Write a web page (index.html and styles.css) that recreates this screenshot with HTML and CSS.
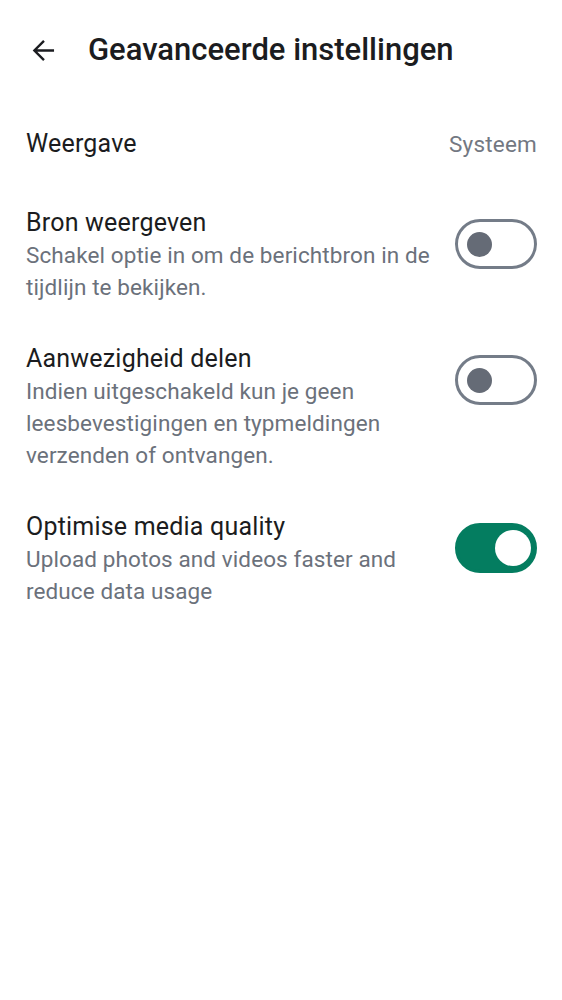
FILE: index.html
```html
<!DOCTYPE html>
<html lang="nl">
<head>
<meta charset="utf-8">
<link rel="stylesheet" href="styles.css">
</head>
<body>
<div class="screen">
  <header class="topbar">
    <svg class="back" width="24" height="24" viewBox="0 0 24 24"><path d="M23 12H2.5M12.5 2L2.5 12l10 10" fill="none" stroke="#1b1c20" stroke-width="2.5"/></svg>
    <h1 class="title">Geavanceerde instellingen</h1>
  </header>
  <div class="row simple">
    <span class="label">Weergave</span>
    <span class="value">Systeem</span>
  </div>
  <div class="row">
    <div class="text">
      <div class="label">Bron weergeven</div>
      <div class="desc">Schakel optie in om de berichtbron in de tijdlijn te bekijken.</div>
    </div>
    <div class="switch"><span class="knob"></span></div>
  </div>
  <div class="row">
    <div class="text">
      <div class="label">Aanwezigheid delen</div>
      <div class="desc">Indien uitgeschakeld kun je geen leesbevestigingen en typmeldingen verzenden of ontvangen.</div>
    </div>
    <div class="switch"><span class="knob"></span></div>
  </div>
  <div class="row">
    <div class="text">
      <div class="label">Optimise media quality</div>
      <div class="desc">Upload photos and videos faster and reduce data usage</div>
    </div>
    <div class="switch on"><span class="knob"></span></div>
  </div>
</div>
</body>
</html>
```
FILE: styles.css
```css
html, body { margin: 0; padding: 0; background: #fff; }
body { font-family: Roboto, "Noto Sans", sans-serif; color: #1b1c20; }
.screen { width: 562px; }
.topbar { display: flex; align-items: center; height: 100px; padding-left: 32px; }
.back { display: block; width: 23px; height: 23px; }
.title { margin: 0 0 0 33px; font-size: 31px; line-height: 40px; font-weight: 500; color: #1b1c20; }
.row { display: flex; align-items: flex-start; padding: 0 25px 0 26px; }
.row.simple { justify-content: space-between; align-items: center; height: 88px; margin-bottom: 19px; }
.label { font-size: 25px; line-height: 32px; letter-spacing: 0.2px; color: #1b1c20; }
.value { font-size: 22.5px; letter-spacing: 0.2px; color: #737882; }
.text { flex: 1; padding-right: 22px; }
.desc { font-size: 22.5px; line-height: 32px; letter-spacing: 0.1px; color: #6b717b; }
.row:not(.simple) { margin-bottom: 40px; }
.switch { flex: none; box-sizing: border-box; width: 82px; height: 50px; border: 3px solid #747c88; border-radius: 25px; display: flex; align-items: center; padding-left: 9px; margin-top: 12px; }
.knob { display: block; width: 25px; height: 25px; border-radius: 50%; background: #656b76; }
.switch.on { background: #047d60; border-color: #047d60; justify-content: flex-end; padding-left: 0; padding-right: 3px; }
.switch.on .knob { width: 36px; height: 36px; background: #fff; }
```
